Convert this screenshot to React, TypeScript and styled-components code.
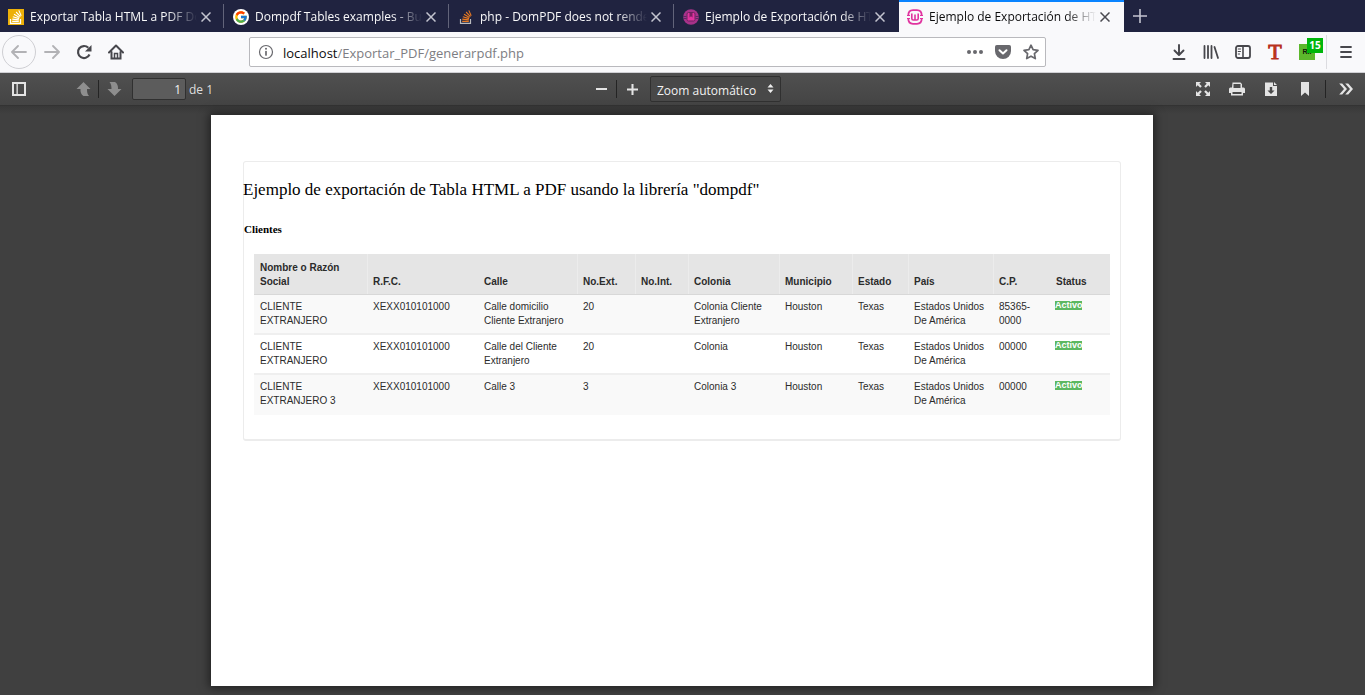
import React from 'react';
import styled, { createGlobalStyle } from 'styled-components';
import { FcGoogle } from 'react-icons/fc';

const GlobalStyle = createGlobalStyle`
  *, *::before, *::after { box-sizing: border-box; }
  body { margin: 0; background: #404040; }
  button, input, select { font: inherit; color: inherit; margin: 0; }
  button { background: none; border: 0; padding: 0; }
`;

const Browser = styled.div`
  display: flex;
  flex-direction: column;
  min-height: 100vh;
  font-family: 'Open Sans', 'Noto Sans', sans-serif;
  font-size: 12px;
`;

/* ---------- tabs ---------- */

const TabStrip = styled.nav`
  display: flex;
  height: 32px;
  background: #202340;
`;

const Tab = styled.div<{ $active?: boolean; $divider?: boolean }>`
  position: relative;
  display: flex;
  align-items: center;
  width: 225px;
  padding: 0 14px 0 8px;
  border-top: 2px solid ${p => (p.$active ? '#0a84ff' : 'transparent')};
  background: ${p => (p.$active ? '#f9f9fb' : 'transparent')};
  color: ${p => (p.$active ? '#0c0c0d' : '#f9f9fa')};
  &:nth-child(4) { width: 224px; }
  &::after {
    content: '';
    display: ${p => (p.$divider ? 'block' : 'none')};
    position: absolute;
    right: 1px;
    top: 2px;
    width: 1px;
    height: 24px;
    background: #62647a;
  }
`;

const Favicon = styled.span<{ $round?: boolean }>`
  display: flex;
  flex: none;
  align-items: center;
  justify-content: center;
  width: 16px;
  height: 16px;
  border-radius: ${p => (p.$round ? '50%' : '0')};
  background: ${p => (p.$round ? '#fff' : 'transparent')};
`;

const TabTitle = styled.a`
  flex: 1;
  min-width: 0;
  margin-left: 6px;
  overflow: hidden;
  white-space: nowrap;
  line-height: 16px;
  color: inherit;
  text-decoration: none;
  mask-image: linear-gradient(to left, transparent, #000 30px);
`;

const CloseButton = styled.button<{ $dark?: boolean }>`
  display: flex;
  flex: none;
  margin-left: 4px;
  color: ${p => (p.$dark ? '#4a4a50' : '#c3c4cf')};
`;

const NewTab = styled.button`
  display: flex;
  align-items: center;
  justify-content: center;
  width: 32px;
  color: #c3c4cf;
`;

/* ---------- navigation bar ---------- */

const NavBar = styled.div`
  display: flex;
  align-items: center;
  height: 41px;
  padding: 0 3px 0 2px;
  background: #f9f9fb;
  border-bottom: 1px solid #d0d0d4;
`;

const NavGroup = styled.div`
  display: flex;
  align-items: center;
`;

const IconButton = styled.button<{ $faded?: boolean; $ring?: boolean }>`
  position: relative;
  display: flex;
  align-items: center;
  justify-content: center;
  width: 32px;
  height: 32px;
  color: ${p => (p.$faded ? '#b2b2b5' : '#47474c')};
  ${p => p.$ring && 'width: 34px; height: 34px; border: 1px solid #cfcfd3; border-radius: 50%;'}
`;

const UrlBar = styled.div`
  display: flex;
  flex: 1;
  align-items: center;
  height: 30px;
  margin: 0 117px;
  padding: 0 6px 0 8px;
  border: 1px solid #b9b9bd;
  border-radius: 2px;
  background: #fff;
  color: #68686d;
`;

const Url = styled.a`
  flex: 1;
  margin-left: 9px;
  padding-top: 2px;
  font-size: 13px;
  line-height: 20px;
  color: #7d7d82;
  text-decoration: none;
`;

const Host = styled.span`
  color: #0c0c0d;
`;

const UrlIcon = styled.button`
  display: flex;
  margin-left: 12px;
`;

const SerifT = styled.span`
  font: 22px/20px 'Liberation Serif', serif;
  color: #b8321c;
  -webkit-text-stroke: 1px #b8321c;
`;

const Extension = styled.span`
  width: 16px;
  height: 16px;
  background: #5cb82c;
  font: bold 7px/16px 'Liberation Sans', sans-serif;
  color: #0c1a05;
  text-align: center;
`;

const Count = styled.span`
  position: absolute;
  top: 2px;
  right: 0;
  width: 16px;
  height: 15px;
  background: #00b60c;
  color: #fff;
  font-size: 10px;
  font-weight: 700;
  line-height: 15px;
  text-align: center;
`;

const MenuDivider = styled.span`
  width: 1px;
  height: 34px;
  margin: 0 3px;
  background: #dcdce0;
`;

/* ---------- viewer toolbar ---------- */

const PdfBar = styled.div`
  display: grid;
  grid-template-columns: 1fr auto 1fr;
  align-items: center;
  height: 33px;
  padding: 0 2px 0 4px;
  background: linear-gradient(#505050, #444);
  border-bottom: 1px solid #333;
  color: #dedede;
`;

const PdfGroup = styled.div<{ $end?: boolean }>`
  display: flex;
  align-items: center;
  justify-content: ${p => (p.$end ? 'flex-end' : 'flex-start')};
`;

const PdfButton = styled.button<{ $faded?: boolean; $wide?: boolean; $apart?: boolean }>`
  display: flex;
  align-items: center;
  justify-content: center;
  width: ${p => (p.$wide ? 34 : 30)}px;
  height: 24px;
  margin-right: ${p => (p.$apart ? 34 : 0)}px;
  color: ${p => (p.$faded ? '#8e8e8e' : '#e4e4e4')};
`;

const PdfDivider = styled.span<{ $spaced?: boolean }>`
  width: 1px;
  height: 18px;
  margin: 0 ${p => (p.$spaced ? 3 : 0)}px;
  background: #242424;
`;

const PageInput = styled.input`
  width: 54px;
  height: 22px;
  margin-left: 3px;
  padding: 0 4px;
  border: 1px solid #303030;
  border-radius: 2px;
  background: #5c5c5c;
  color: #f2f2f2;
  text-align: right;
`;

const PageTotal = styled.span`
  margin-left: 3px;
`;

const ZoomBox = styled.div`
  position: relative;
  margin-left: 3px;
`;

const ZoomSelect = styled.select`
  display: block;
  width: 131px;
  height: 26px;
  padding: 3px 20px 0 6px;
  appearance: none;
  border: 1px solid #303030;
  border-radius: 2px;
  background: #484848;
  color: #f2f2f2;
`;

const ZoomArrows = styled.svg`
  position: absolute;
  top: 8px;
  right: 7px;
  pointer-events: none;
`;

/* ---------- document ---------- */

const Viewer = styled.main`
  display: flex;
  flex: 1;
  padding: 9px 212px 9px 211px;
  background: linear-gradient(#383838, #404040 8px);
`;

const Sheet = styled.article`
  flex: 1;
  padding: 46px 32px;
  background: #fff;
  box-shadow: 0 0 9px 2px rgba(0, 0, 0, 0.5);
  color: #000;
`;

const Panel = styled.section`
  padding: 17px 10px 24px;
  border: 1px solid #ececec;
  border-width: 1px 1px 2px;
  border-radius: 3px;
`;

const Title = styled.h1`
  margin: 0 0 0 -11px;
  font: 17px/22px 'Liberation Serif', serif;
`;

const Subtitle = styled.h2`
  margin: 21px 0 18px -10px;
  font: bold 11px/14px 'Liberation Serif', serif;
`;

const Table = styled.table`
  width: 100%;
  table-layout: fixed;
  border-collapse: separate;
  border-spacing: 0;
  font: 10px/14px 'Liberation Sans', sans-serif;
  color: #2b2b2b;
`;

const HeadCell = styled.th`
  padding: 7px 5px 5px 6px;
  border-bottom: 1px solid #d8d8d8;
  background: #e5e5e5 linear-gradient(#ececec, #ececec) 0 0 / 1px 100% no-repeat;
  text-align: left;
  vertical-align: bottom;
  &:first-child, &:nth-child(3), &:last-child { background-image: none; }
`;

const Row = styled.tr`
  background: #fff;
  &:nth-child(odd) { background: #f9f9f9; }
  &:last-child td { border-bottom-color: #f9f9f9; }
`;

const Cell = styled.td`
  padding: 5px 5px 5px 6px;
  border-bottom: 2px solid #efefef;
  vertical-align: top;
`;

const Status = styled.span`
  display: block;
  width: 27px;
  height: 9px;
  margin: 1px 0 0 -1px;
  background: #5cb860;
  color: #fff;
  font-size: 9px;
  font-weight: 700;
  line-height: 9px;
  white-space: nowrap;
`;

/* ---------- icons ---------- */

const StackIcon = ({ tile }: { tile?: boolean }) => (
  <svg width="16" height="16" viewBox="0 0 16 16" fill="none">
    {tile && <rect width="16" height="16" fill="#edb009" />}
    <path d="M2.5 10v4.3h10V10" stroke={tile ? '#fff' : '#b9babd'} strokeWidth="1.2" />
    <path
      d="M4.2 12.4h6.6M4.3 10.1l6.5.8M4.8 7.7l6.3 1.9M6 5.2l5.5 3.3M8.1 3l4.3 4.6M10.8 1.4l2.4 5.4"
      stroke={tile ? '#fff' : '#e87922'}
      strokeWidth="1.1"
    />
  </svg>
);

const WampIcon = ({ solid }: { solid?: boolean }) => (
  <svg width="16" height="16" viewBox="0 0 16 16" fill="none">
    {solid ? (
      <>
        <circle cx="8" cy="8" r="7.8" fill="#a8328a" />
        <path d="M0 7.5h3.5M12.5 7.5H16M0 9.5h3.5M12.5 9.5H16" stroke="#5d2a63" />
        <rect x="4" y="3.5" width="8" height="8.5" rx="1.5" fill="#e0339f" stroke="#6d2460" />
        <path d="M6.5 4v4.500L8 7.200l1.500 1.300V4z" fill="#7a1f62" />
      </>
    ) : (
      <>
        <path
          d="M1.300 6.500C1.300 3 3 1.200 6 1.200h4c3 0 4.700 1.800 4.700 5.300M1.300 9.500c0 3.500 1.700 5.300 4.700 5.300h4c3 0 4.700-1.800 4.700-5.300"
          stroke="#e0339f"
          strokeWidth="1.800"
        />
        <path d="M0 6.500h3M13 6.500h3M0 9.500h3M13 9.500h3" stroke="#e0339f" strokeWidth="1" />
        <path d="M4.800 4.500V9.500q0 1.500 1.500 1.500h3.400q1.500 0 1.500-1.500V4.500M8 5.500V11" stroke="#e0339f" strokeWidth="1.600" />
      </>
    )}
  </svg>
);

const CloseIcon = () => (
  <svg width="10" height="10" viewBox="0 0 10 10" stroke="currentColor" strokeWidth="1.5">
    <path d="M.5.5l9 9M9.5.5l-9 9" />
  </svg>
);

const PlusIcon = ({ size = 14, weight = 1.6 }: { size?: number; weight?: number }) => (
  <svg width={size} height={size} viewBox="0 0 14 14" stroke="currentColor" strokeWidth={weight}>
    <path d="M7 0v14M0 7h14" />
  </svg>
);

const Icon = ({ children }: { children: React.ReactNode }) => (
  <svg
    width="16"
    height="16"
    viewBox="0 0 16 16"
    fill="none"
    stroke="currentColor"
    strokeWidth="2"
    strokeLinecap="round"
    strokeLinejoin="round"
  >
    {children}
  </svg>
);

const SolidIcon = ({ children }: { children: React.ReactNode }) => (
  <svg width="16" height="16" viewBox="0 0 16 16" fill="currentColor">
    {children}
  </svg>
);

/* ---------- data ---------- */

const tabs = [
  { title: 'Exportar Tabla HTML a PDF Dom', icon: <StackIcon tile />, divider: true },
  { title: 'Dompdf Tables examples - Busc', icon: <FcGoogle size={14} />, round: true, divider: true },
  { title: 'php - DomPDF does not render', icon: <StackIcon />, divider: true },
  { title: 'Ejemplo de Exportación de HTM', icon: <WampIcon solid /> },
  { title: 'Ejemplo de Exportación de HTM', icon: <WampIcon />, active: true },
];

const columns: [string, number][] = [
  ['Nombre o Razón Social', 113],
  ['R.F.C.', 111],
  ['Calle', 99],
  ['No.Ext.', 58],
  ['No.Int.', 53],
  ['Colonia', 91],
  ['Municipio', 73],
  ['Estado', 56],
  ['País', 85],
  ['C.P.', 57],
  ['Status', 60],
];

const clients = [
  ['CLIENTE EXTRANJERO', 'XEXX010101000', 'Calle domicilio Cliente Extranjero', '20', '', 'Colonia Cliente Extranjero', 'Houston', 'Texas', 'Estados Unidos De América', '85365-0000'],
  ['CLIENTE EXTRANJERO', 'XEXX010101000', 'Calle del Cliente Extranjero', '20', '', 'Colonia', 'Houston', 'Texas', 'Estados Unidos De América', '00000'],
  ['CLIENTE EXTRANJERO 3', 'XEXX010101000', 'Calle 3', '3', '', 'Colonia 3', 'Houston', 'Texas', 'Estados Unidos De América', '00000'],
];

const Col = styled.col<{ $width: number }>`
  width: ${p => p.$width}px;
`;

export default function App() {
  return (
    <Browser>
      <GlobalStyle />
      <TabStrip aria-label="Pestañas">
        {tabs.map((tab, i) => (
          <Tab key={i} $active={tab.active} $divider={tab.divider}>
            <Favicon $round={tab.round}>{tab.icon}</Favicon>
            <TabTitle href="#">{tab.title}</TabTitle>
            <CloseButton $dark={tab.active} aria-label="Cerrar pestaña">
              <CloseIcon />
            </CloseButton>
          </Tab>
        ))}
        <NewTab aria-label="Nueva pestaña">
          <PlusIcon />
        </NewTab>
      </TabStrip>

      <NavBar>
        <NavGroup>
          <IconButton $ring $faded aria-label="Atrás">
            <Icon><path d="M15 8H1.500M7 2L1 8l6 6" strokeWidth="1.800" /></Icon>
          </IconButton>
          <IconButton $faded aria-label="Adelante">
            <Icon><path d="M1 8h13.500M9 2l6 6-6 6" strokeWidth="1.800" /></Icon>
          </IconButton>
          <IconButton aria-label="Recargar">
            <Icon>
              <path d="M13.500 10.500A6 6 0 1 1 12.300 3.800" strokeLinecap="butt" strokeWidth="2.200" />
              <path d="M15.500 1v6.500H9z" fill="currentColor" stroke="none" />
            </Icon>
          </IconButton>
          <IconButton aria-label="Inicio">
            <Icon>
              <path d="M1 8.500l7-7 7 7" />
              <path d="M3.500 8v6.500h9V8" strokeLinejoin="miter" />
              <path d="M6.500 14V9.500h3V14" strokeWidth="1.500" strokeLinejoin="miter" />
            </Icon>
          </IconButton>
        </NavGroup>

        <UrlBar>
          <Icon>
            <circle cx="8" cy="8" r="6.500" strokeWidth="1.200" />
            <path d="M8 7.500v3.500" strokeWidth="1.700" />
            <circle cx="8" cy="4.800" r="1" fill="currentColor" stroke="none" />
          </Icon>
          <Url href="#"><Host>localhost</Host>/Exportar_PDF/generarpdf.php</Url>
          <UrlIcon aria-label="Acciones de página">
            <SolidIcon>
              <circle cx="2" cy="8" r="2" />
              <circle cx="8" cy="8" r="2" />
              <circle cx="14" cy="8" r="2" />
            </SolidIcon>
          </UrlIcon>
          <UrlIcon aria-label="Guardar en Pocket">
            <Icon>
              <path d="M1.800 1h12.400q1.800 0 1.800 1.800V7a8 8 0 0 1-16 0V2.800Q0 1 1.800 1z" fill="currentColor" stroke="none" />
              <path d="M4.500 6.200L8 9.500l3.500-3.300" stroke="#fff" />
            </Icon>
          </UrlIcon>
          <UrlIcon aria-label="Marcar página">
            <Icon>
              <path d="M8 1.200l2.100 4.500 4.900.6-3.600 3.400.9 4.900L8 12.200l-4.300 2.400.9-4.900L1 6.300l4.900-.6z" strokeWidth="1.700" />
            </Icon>
          </UrlIcon>
        </UrlBar>

        <NavGroup>
          <IconButton aria-label="Descargas">
            <Icon><path d="M8 1v9.500M3.500 6.500L8 11l4.500-4.500M2.500 15h11" strokeWidth="1.900" /></Icon>
          </IconButton>
          <IconButton aria-label="Biblioteca">
            <Icon><path d="M1.500 2v12M5 2v12M8.500 2v12M11.500 3L15 14" strokeWidth="1.800" /></Icon>
          </IconButton>
          <IconButton aria-label="Barras laterales">
            <Icon>
              <rect x="1" y="2" width="14" height="12" rx="2" strokeWidth="1.800" />
              <path d="M8 2v12" strokeWidth="1.600" />
              <path d="M3.200 5h2.300M3.200 7.500h2.300M3.200 10h1.500" strokeWidth="1" />
            </Icon>
          </IconButton>
          <IconButton aria-label="Texto"><SerifT>T</SerifT></IconButton>
          <IconButton aria-label="Extensión">
            <Extension>R..</Extension>
            <Count>15</Count>
          </IconButton>
          <MenuDivider />
          <IconButton aria-label="Menú">
            <Icon><path d="M3 3h10M3 8h10M3 13h10" strokeWidth="1.800" /></Icon>
          </IconButton>
        </NavGroup>
      </NavBar>

      <PdfBar>
        <PdfGroup>
          <PdfButton $apart aria-label="Barra lateral">
            <SolidIcon>
              <path fillRule="evenodd" d="M1 1h14v14H1zM3 3v10h2.500V3zM6.800 3v10H13V3z" />
            </SolidIcon>
          </PdfButton>
          <PdfButton $faded aria-label="Página anterior">
            <SolidIcon><path d="M8.500 1L15.500 8H12c0 3 .3 5 2 7H8.500c-2.500-1.500-3.200-4-3-7H1.500z" /></SolidIcon>
          </PdfButton>
          <PdfDivider />
          <PdfButton $faded aria-label="Página siguiente">
            <SolidIcon><path d="M8.500 15L15.500 8H12c.2-3-.6-5.500-3-7H3.500c1.700 2 2 4 2 7H1.500z" /></SolidIcon>
          </PdfButton>
          <PageInput aria-label="Página" defaultValue="1" />
          <PageTotal>de 1</PageTotal>
        </PdfGroup>

        <PdfGroup>
          <PdfButton aria-label="Reducir">
            <svg width="11" height="2"><rect width="11" height="2" fill="currentColor" /></svg>
          </PdfButton>
          <PdfDivider />
          <PdfButton aria-label="Aumentar"><PlusIcon size={11} weight={2.6} /></PdfButton>
          <ZoomBox>
            <ZoomSelect aria-label="Zoom">
              <option>Zoom automático</option>
            </ZoomSelect>
            <ZoomArrows width="7" height="9" viewBox="0 0 7 9" fill="#eee">
              <path d="M3.500 0L6.500 3.500h-6zM3.500 9L.5 5.500h6z" />
            </ZoomArrows>
          </ZoomBox>
        </PdfGroup>

        <PdfGroup $end>
          <PdfButton $wide aria-label="Presentación">
            <SolidIcon>
              <path d="M1 1h5L4.300 2.700 6.800 5.200 5.200 6.800 2.700 4.300 1 6zM15 1v5l-1.700-1.700-2.500 2.500-1.600-1.600 2.500-2.500L10 1zM1 15v-5l1.700 1.700 2.500-2.500 1.600 1.600-2.500 2.500L6 15zM15 15h-5l1.700-1.700-2.500-2.500 1.600-1.600 2.500 2.500L15 10z" />
            </SolidIcon>
          </PdfButton>
          <PdfButton $wide aria-label="Imprimir">
            <SolidIcon>
              <path fillRule="evenodd" d="M3.500 1.500h8l1.500 1.500v3.500h1.500q1.500 0 1.500 1.500v4h-2v2.500H2V12H0V8q0-1.500 1.500-1.500H3zM4.500 3v4h7V3zM3.500 11v2h9v-2z" />
            </SolidIcon>
          </PdfButton>
          <PdfButton $wide aria-label="Descargar">
            <SolidIcon>
              <path fillRule="evenodd" d="M2 1.500h8V5h4v10H2zM6.800 6v3.500H4.500L8 13l3.500-3.500H9.200V6zM11 1l3 3h-3z" />
            </SolidIcon>
          </PdfButton>
          <PdfButton $wide aria-label="Vista actual">
            <SolidIcon><path d="M4 1h8v14L8 11.500 4 15z" /></SolidIcon>
          </PdfButton>
          <PdfDivider $spaced />
          <PdfButton $wide aria-label="Herramientas">
            <SolidIcon>
              <path d="M1.200 2.500h3L9 8l-4.800 5.500h-3L6 8zM7.200 2.500h3L15 8l-4.800 5.500h-3L12 8z" />
            </SolidIcon>
          </PdfButton>
        </PdfGroup>
      </PdfBar>

      <Viewer>
        <Sheet>
          <Panel>
            <Title>Ejemplo de exportación de Tabla HTML a PDF usando la librería "dompdf"</Title>
            <Subtitle>Clientes</Subtitle>
            <Table>
              <colgroup>
                {columns.map(([name, width]) => <Col key={name} $width={width} />)}
              </colgroup>
              <thead>
                <tr>
                  {columns.map(([name]) => <HeadCell key={name} scope="col">{name}</HeadCell>)}
                </tr>
              </thead>
              <tbody>
                {clients.map((client, i) => (
                  <Row key={i}>
                    {client.map((value, j) => <Cell key={j}>{value}</Cell>)}
                    <Cell><Status>Activo</Status></Cell>
                  </Row>
                ))}
              </tbody>
            </Table>
          </Panel>
        </Sheet>
      </Viewer>
    </Browser>
  );
}
